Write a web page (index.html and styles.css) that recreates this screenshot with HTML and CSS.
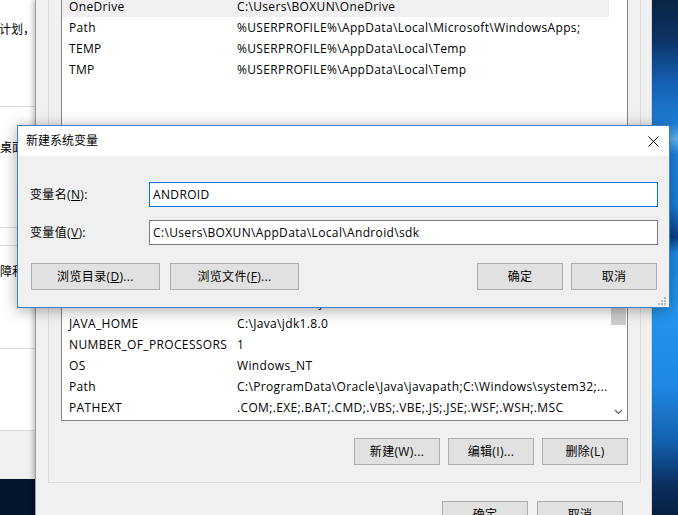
FILE: index.html
```html
<!DOCTYPE html>
<html lang="zh-CN">
<head>
<meta charset="utf-8">
<title>新建系统变量</title>
<link rel="stylesheet" href="styles.css">
</head>
<body>
<div class="desktop">
  <section class="win-left">
    <div class="ls ls1"><p class="ltext t1">系统计划，以便</p></div>
    <div class="ls ls2"><p class="ltext t2">桌面设置</p></div>
    <div class="ls ls3"></div>
    <div class="ls ls4"><p class="ltext t3">障和恢复</p></div>
    <div class="ls ls5"></div>
    <div class="ls ls6"></div>
  </section>

  <section class="win-main">
    <div class="group group-user">
      <div class="listview lv-user">
        <div class="rows">
          <div class="row selected"><span class="c1">OneDrive</span><span class="c2">C:\Users\BOXUN\OneDrive</span></div>
          <div class="row"><span class="c1">Path</span><span class="c2">%USERPROFILE%\AppData\Local\Microsoft\WindowsApps;</span></div>
          <div class="row"><span class="c1">TEMP</span><span class="c2">%USERPROFILE%\AppData\Local\Temp</span></div>
          <div class="row"><span class="c1">TMP</span><span class="c2">%USERPROFILE%\AppData\Local\Temp</span></div>
        </div>
      </div>
      <div class="btnrow">
        <button class="btn">新建(N)...</button>
        <button class="btn">编辑(E)...</button>
        <button class="btn">删除(D)</button>
      </div>
    </div>

    <div class="group group-sys">
      <div class="listview lv-sys">
        <div class="rows">
          <div class="row"><span class="c1">ComSpec</span><span class="c2">C:\Windows\system32\cmd.exe</span></div>
          <div class="row"><span class="c1">configsetroot</span><span class="c2">C:\Windows\ConfigSetRoot</span></div>
          <div class="row"><span class="c1">DriverData</span><span class="c2">C:\Windows\System32\Drivers\DriverData</span></div>
          <div class="row"><span class="c1">JAVA_HOME</span><span class="c2">C:\Java\jdk1.8.0</span></div>
          <div class="row"><span class="c1">NUMBER_OF_PROCESSORS</span><span class="c2">1</span></div>
          <div class="row"><span class="c1">OS</span><span class="c2">Windows_NT</span></div>
          <div class="row"><span class="c1">Path</span><span class="c2">C:\ProgramData\Oracle\Java\javapath;C:\Windows\system32;...</span></div>
          <div class="row"><span class="c1">PATHEXT</span><span class="c2">.COM;.EXE;.BAT;.CMD;.VBS;.VBE;.JS;.JSE;.WSF;.WSH;.MSC</span></div>
        </div>
        <div class="vscroll">
          <div class="sb-arrow"><svg width="9" height="6" viewBox="0 0 9 6"><path d="M1 5 L4.5 1.5 L8 5" fill="none" stroke="#606060" stroke-width="1.2"/></svg></div>
          <div class="sb-track"><div class="sb-thumb"></div></div>
          <div class="sb-arrow"><svg width="9" height="6" viewBox="0 0 9 6"><path d="M1 1 L4.5 4.5 L8 1" fill="none" stroke="#606060" stroke-width="1.2"/></svg></div>
        </div>
      </div>
      <div class="btnrow">
        <button class="btn">新建(W)...</button>
        <button class="btn">编辑(I)...</button>
        <button class="btn">删除(L)</button>
      </div>
    </div>

    <div class="footer">
      <button class="btn">确定</button>
      <button class="btn">取消</button>
    </div>
  </section>

  <section class="dialog">
    <header class="titlebar">
      <span class="title">新建系统变量</span>
      <span class="close"><svg width="11" height="11" viewBox="0 0 11 11"><path d="M0.5 0.5 L10.5 10.5 M10.5 0.5 L0.5 10.5" stroke="#000" stroke-width="1"/></svg></span>
    </header>
    <div class="dbody">
      <div class="field">
        <label class="flabel">变量名(<u>N</u>):</label>
        <div class="finput focused">ANDROID</div>
      </div>
      <div class="field">
        <label class="flabel">变量值(<u>V</u>):</label>
        <div class="finput">C:\Users\BOXUN\AppData\Local\Android\sdk</div>
      </div>
      <div class="dbuttons">
        <div class="dgroup dgroup-left">
          <button class="btn wide">浏览目录(<u>D</u>)...</button>
          <button class="btn wide">浏览文件(<u>F</u>)...</button>
        </div>
        <div class="dgroup dgroup-right">
          <button class="btn">确定</button>
          <button class="btn">取消</button>
        </div>
      </div>
    </div>
    <span class="grip"><svg width="8" height="8" viewBox="0 0 8 8" fill="#bdbdbd"><rect x="6" y="0" width="2" height="2"/><rect x="3" y="3" width="2" height="2"/><rect x="6" y="3" width="2" height="2"/><rect x="0" y="6" width="2" height="2"/><rect x="3" y="6" width="2" height="2"/><rect x="6" y="6" width="2" height="2"/></svg></span>
  </section>
</div>
</body>
</html>
```

FILE: styles.css
```css
* { box-sizing: border-box; }

html, body {
  margin: 0;
  padding: 0;
  width: 678px;
  height: 515px;
  overflow: hidden;
}

body {
  font-family: "Open Sans", "Noto Sans CJK SC", sans-serif;
  font-size: 12px;
  letter-spacing: 0.35px;
  color: #000;
}

.desktop {
  position: relative;
  width: 678px;
  height: 515px;
  overflow: hidden;
  background:
    linear-gradient(to bottom,
      #0a2444 0%, #0c3466 8%, #1560b4 16%, #1e7fd6 24%, #63b4f0 27%, #1e86e0 30%,
      #1a7ed8 40%, #0b3f86 46%, #1f8ae4 49%, #2596ee 60%, #1e88e2 75%,
      #145fae 86%, #0b3060 94%, #071f40 100%) 652px 0 / 26px 100% no-repeat,
    #02152d;
}

/* ---------- left background window ---------- */
.win-left {
  position: absolute;
  left: 0;
  top: 0;
  width: 36px;
  height: 479px;
  background: #fff;
  overflow: hidden;
}

.ls { border-bottom: 1px solid #d9d9d9; }
.ls1 { height: 107px; padding-top: 19px; }
.ls2 { height: 121px; padding-top: 30px; }
.ls3 { height: 18px; }
.ls4 { height: 103px; padding-top: 15px; }
.ls5 { height: 82px; }
.ls6 { height: 48px; background: #f0f0f0; border-bottom: 0; }

.ltext {
  margin: 0;
  line-height: 21px;
  white-space: nowrap;
  letter-spacing: 0;
}
.t1 { margin-left: -25px; }

/* ---------- main window ---------- */
.win-main {
  position: absolute;
  left: 35px;
  top: 0;
  width: 617px;
  height: 540px;
  background: #f0f0f0;
  border-left: 1px solid #9c9c9c;
  border-right: 1px solid #d4d4d4;
  box-shadow: -2px 0 5px rgba(0, 0, 0, 0.25);
}

.group {
  margin: 0 10px 0 12px;
  border: 1px solid #dcdcdc;
  padding: 0 12px;
}

.group-user {
  margin-top: -30px;
  height: 256px;
  padding-top: 24px;
}

.group-sys {
  margin-top: 8px;
  padding-top: 14px;
  padding-bottom: 17px;
}

.listview {
  border: 1px solid #828790;
  background: #fff;
  display: flex;
}

.lv-user { height: 175px; }
.lv-sys { height: 172px; }

.rows { flex: 1; overflow: hidden; }

.row {
  display: flex;
  width: 547px;
  height: 21px;
  padding-top: 1px;
  line-height: 20px;
  white-space: nowrap;
}
.row.selected { background: #f0f0f0; }

.c1 { width: 175px; padding-left: 7px; flex: none; }
.c2 { flex: 1; overflow: hidden; }

.vscroll {
  width: 17px;
  flex: none;
  display: flex;
  flex-direction: column;
  background: #fff;
}
.sb-arrow {
  height: 17px;
  display: flex;
  align-items: center;
  justify-content: center;
}
.sb-track { flex: 1; padding: 0 1px; }
.sb-thumb {
  margin-top: 18px;
  height: 40px;
  background: #cdcdcd;
}

.btnrow {
  display: flex;
  justify-content: flex-end;
  gap: 8px;
  margin-top: 17px;
}
.group-user .btnrow { margin-top: 15px; }

.btn {
  width: 86px;
  height: 27px;
  padding: 0;
  margin: 0;
  background: #e1e1e1;
  border: 1px solid #adadad;
  border-radius: 0;
  font: inherit;
  letter-spacing: inherit;
  color: #000;
  line-height: 25px;
  white-space: nowrap;
}
.btn.wide { width: 129px; }

.footer {
  display: flex;
  justify-content: flex-end;
  gap: 9px;
  margin-top: 18px;
  padding-right: 28px;
}

/* ---------- dialog ---------- */
.dialog {
  position: absolute;
  left: 17px;
  top: 125px;
  width: 653px;
  height: 183px;
  background: #f0f0f0;
  border: 1px solid #3a82cc;
  box-shadow: 0 2px 14px rgba(0, 0, 0, 0.35);
}

.titlebar {
  height: 30px;
  background: #fff;
  display: flex;
  align-items: center;
  justify-content: space-between;
  padding-left: 8px;
  padding-right: 10px;
}
.title { line-height: 20px; letter-spacing: 0; }
.close { display: flex; }

.dbody {
  padding: 26px 11px 0 12px;
}

.field {
  display: flex;
  align-items: center;
  height: 25px;
  margin-bottom: 13px;
}
.flabel { width: 119px; flex: none; line-height: 20px; padding-top: 1px; }
.finput {
  flex: 1;
  height: 25px;
  background: #fff;
  border: 1px solid #7a7a7a;
  padding-left: 3px;
  line-height: 23px;
  white-space: nowrap;
}
.finput.focused { border-color: #0078d7; }

.dbuttons {
  display: flex;
  justify-content: space-between;
  margin-top: 18px;
  padding: 0 1px 0 1px;
}
.dgroup { display: flex; }
.dgroup-left { gap: 10px; }
.dgroup-right { gap: 8px; }

.grip {
  position: absolute;
  right: 3px;
  bottom: 2px;
  display: flex;
}
```
